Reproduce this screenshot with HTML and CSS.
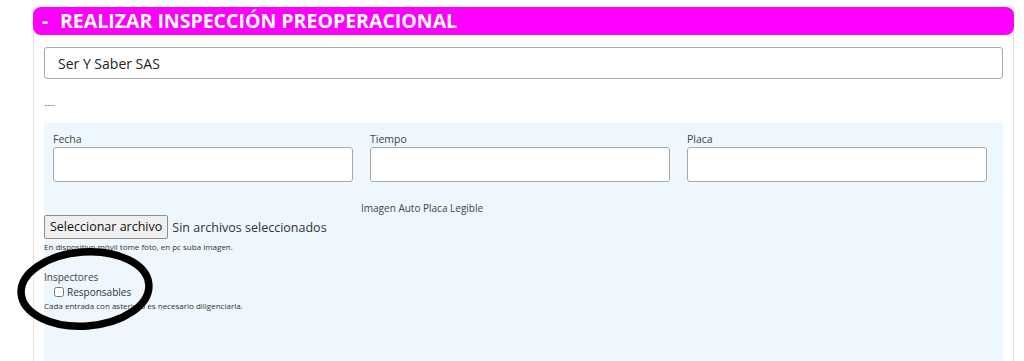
FILE: index.html
```html
<!DOCTYPE html>
<html lang="es">
<head>
  <meta charset="UTF-8">
  <meta name="viewport" content="width=device-width, initial-scale=1.0">
  <title>Realizar Inspección Preoperacional</title>
  <link rel="stylesheet" href="styles.css">
</head>
<body>
  <div class="card">
    <h1 class="card-title"><span class="toggle">-</span>REALIZAR INSPECCIÓN PREOPERACIONAL</h1>
    <div class="card-body">
      <input type="text" class="company" value="Ser Y Saber SAS">
      <p class="dashes">---</p>

      <div class="form-panel">
        <div class="row">
          <div class="field">
            <label for="fecha">Fecha</label>
            <input type="text" id="fecha">
          </div>
          <div class="field">
            <label for="tiempo">Tiempo</label>
            <input type="text" id="tiempo">
          </div>
          <div class="field">
            <label for="placa">Placa</label>
            <input type="text" id="placa">
          </div>
        </div>

        <p class="image-label">Imagen Auto Placa Legible</p>
        <div class="file-row">
          <button type="button" class="file-btn">Seleccionar archivo</button>
          <span class="file-name">Sin archivos seleccionados</span>
        </div>
        <p class="hint">En dispositivo móvil tome foto, en pc suba imagen.</p>

        <p class="group-label">Inspectores</p>
        <label class="check">
          <input type="checkbox">
          <span>Responsables</span>
        </label>
        <p class="hint">Cada entrada con asterisco es necesario diligenciarla.</p>
      </div>
    </div>
  </div>

  <!-- marca a mano sobre la captura -->
  <svg class="circle-mark" width="140" height="86" viewBox="0 0 140 86">
    <ellipse cx="69" cy="43" rx="64" ry="37" fill="none" stroke="#000" stroke-width="7.5" transform="rotate(-4 69 43)"/>
  </svg>
</body>
</html>
```

FILE: styles.css
```css
body {
  font-family: 'Open Sans', 'Liberation Sans', sans-serif;
  color: #333;
  background-color: #ffffff;
  margin: 0;
  padding: 7px 10px 0 33px;
  position: relative;
}

.card {
  border-left: 1px solid #e3e3e3;
  border-right: 1px solid #e3e3e3;
  height: 360px;
}

.card-title {
  margin: 0 -1px;
  background-color: #ff00ff;
  color: #ffffff;
  border-radius: 8px;
  font-size: 19.5px;
  font-weight: bold;
  line-height: 28px;
  height: 28px;
  padding-left: 9px;
}

.toggle {
  display: inline-block;
  width: 18px;
}

.card-body {
  padding: 12px 10px 0;
}

.company {
  display: block;
  width: 100%;
  height: 32px;
  box-sizing: border-box;
  border: 1px solid #a9a9a9;
  border-radius: 3px;
  padding: 0 13px;
  font-family: inherit;
  font-size: 14px;
  color: #222;
  background: #fff;
}

.dashes {
  margin: 18px 0 12px;
  font-size: 11px;
  line-height: 14px;
  color: #888;
}

.form-panel {
  background-color: #eef6fe;
  padding-top: 9px;
  height: 240px;
}

.row {
  display: grid;
  grid-template-columns: 300px 300px 300px;
  column-gap: 17px;
  padding-left: 9px;
}

.field label {
  display: block;
  font-size: 10.5px;
  line-height: 15px;
  color: #444;
}

.field input {
  display: block;
  width: 100%;
  height: 35px;
  box-sizing: border-box;
  border: 1px solid #a9a9a9;
  border-radius: 3px;
  background: #fff;
  margin: 0;
}

.image-label {
  margin: 19px 0 0 317px;
  font-size: 10px;
  line-height: 14px;
  color: #444;
}

.file-row {
  display: flex;
  align-items: center;
  gap: 4px;
}

.file-btn {
  font-family: inherit;
  font-size: 12.5px;
  color: #111;
  background-color: #efefef;
  border: 1px solid #8f8f8f;
  border-radius: 2px;
  padding: 0 5px;
  height: 24px;
  line-height: 20px;
}

.file-name {
  font-size: 12.5px;
  color: #333;
}

.hint {
  margin: 2px 0 0;
  font-size: 8px;
  line-height: 12px;
  color: #333;
}

.group-label {
  margin: 17px 0 0;
  font-size: 10px;
  line-height: 14px;
  color: #444;
}

.check {
  display: flex;
  align-items: center;
  gap: 3px;
  margin: 0 0 0 10px;
  font-size: 10px;
  line-height: 16px;
  color: #333;
}

.check input {
  margin: 0;
  width: 10px;
  height: 10px;
}

.check + .hint {
  margin-top: 0;
}

.circle-mark {
  position: absolute;
  left: 16px;
  top: 246px;
}
```
